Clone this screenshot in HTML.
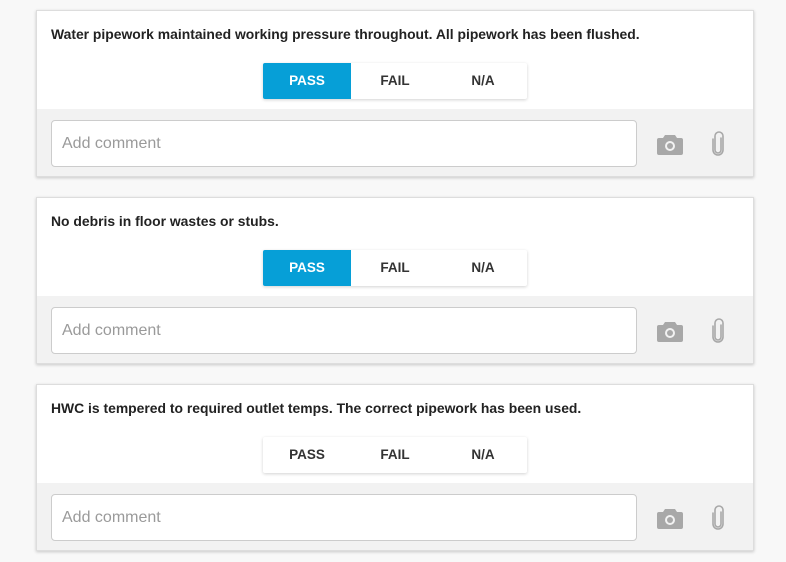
<!DOCTYPE html>
<html><head><style>
body{margin:0;background:#f8f8f8;width:786px;height:562px;overflow:hidden;font-family:"Liberation Sans",sans-serif;}
.card{position:absolute;left:36px;width:718px;height:167px;background:#fff;border:1px solid #ddd;box-shadow:0 1px 3px rgba(0,0,0,.2);box-sizing:border-box;}
.q{position:absolute;left:14px;top:15px;font-size:13.9px;font-weight:bold;color:#222;}
.btns{position:absolute;left:226px;top:52px;width:264px;height:36px;display:flex;box-shadow:0 1px 3px rgba(0,0,0,.18);border-radius:2px;}
.btns div{flex:1;text-align:center;line-height:36px;font-size:13.5px;font-weight:bold;color:#333;}
.btns .on{background:#069fd7;color:#fff;border-radius:2px 0 0 2px;}
.bot{position:absolute;left:0;top:98px;width:716px;height:67px;background:#f2f2f2;}
.in{position:absolute;left:14px;top:11px;width:586px;height:47px;background:#fff;border:1px solid #ccc;border-radius:4px;box-sizing:border-box;font-size:16px;color:#9a9a9a;line-height:46px;padding-left:10px;}
.cam{position:absolute;left:620px;top:24px;}
.clip{position:absolute;left:673px;top:22px;}
</style></head><body>
<div class="card" style="top:10px"><div class="q">Water pipework maintained working pressure throughout. All pipework has been flushed.</div>
<div class="btns"><div class="on">PASS</div><div>FAIL</div><div>N/A</div></div>
<div class="bot"><div class="in">Add comment</div>
<svg class="cam" width="26" height="22" viewBox="0 0 26 22"><path d="M8 2h10l2 3h4a2 2 0 0 1 2 2v13a2 2 0 0 1-2 2H2a2 2 0 0 1-2-2V7a2 2 0 0 1 2-2h4z" fill="#a8a8a8"/><circle cx="13" cy="13" r="5" fill="#f2f2f2"/><circle cx="13" cy="13" r="3" fill="#a8a8a8"/></svg>
<svg class="clip" width="16" height="26" viewBox="0 0 16 26"><path d="M11 7v12a3 3 0 0 1-6 0V5a4 4 0 0 1 8 0v14a5 5 0 0 1-10 0V8" fill="none" stroke="#a8a8a8" stroke-width="1.6" stroke-linecap="round"/></svg></div></div>

<div class="card" style="top:197px"><div class="q">No debris in floor wastes or stubs.</div>
<div class="btns"><div class="on">PASS</div><div>FAIL</div><div>N/A</div></div>
<div class="bot"><div class="in">Add comment</div>
<svg class="cam" width="26" height="22" viewBox="0 0 26 22"><path d="M8 2h10l2 3h4a2 2 0 0 1 2 2v13a2 2 0 0 1-2 2H2a2 2 0 0 1-2-2V7a2 2 0 0 1 2-2h4z" fill="#a8a8a8"/><circle cx="13" cy="13" r="5" fill="#f2f2f2"/><circle cx="13" cy="13" r="3" fill="#a8a8a8"/></svg>
<svg class="clip" width="16" height="26" viewBox="0 0 16 26"><path d="M11 7v12a3 3 0 0 1-6 0V5a4 4 0 0 1 8 0v14a5 5 0 0 1-10 0V8" fill="none" stroke="#a8a8a8" stroke-width="1.6" stroke-linecap="round"/></svg></div></div>

<div class="card" style="top:384px"><div class="q">HWC is tempered to required outlet temps. The correct pipework has been used.</div>
<div class="btns"><div>PASS</div><div>FAIL</div><div>N/A</div></div>
<div class="bot"><div class="in">Add comment</div>
<svg class="cam" width="26" height="22" viewBox="0 0 26 22"><path d="M8 2h10l2 3h4a2 2 0 0 1 2 2v13a2 2 0 0 1-2 2H2a2 2 0 0 1-2-2V7a2 2 0 0 1 2-2h4z" fill="#a8a8a8"/><circle cx="13" cy="13" r="5" fill="#f2f2f2"/><circle cx="13" cy="13" r="3" fill="#a8a8a8"/></svg>
<svg class="clip" width="16" height="26" viewBox="0 0 16 26"><path d="M11 7v12a3 3 0 0 1-6 0V5a4 4 0 0 1 8 0v14a5 5 0 0 1-10 0V8" fill="none" stroke="#a8a8a8" stroke-width="1.6" stroke-linecap="round"/></svg></div></div>
</body></html>
